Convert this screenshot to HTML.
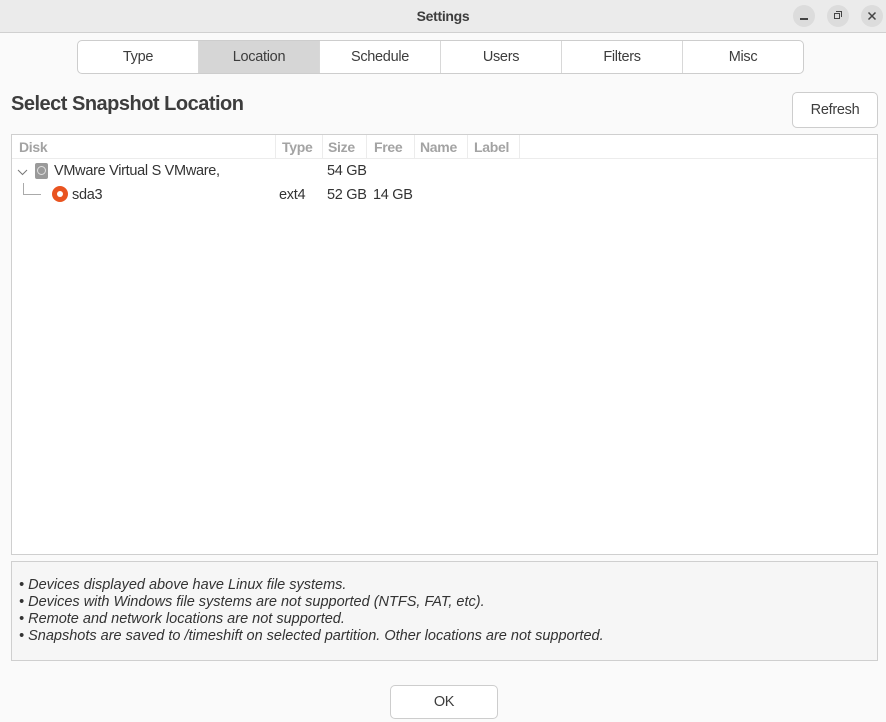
<!DOCTYPE html>
<html><head><meta charset="utf-8"><style>
*{box-sizing:border-box;margin:0;padding:0}
body{width:886px;height:722px;background:#fafafa;font-family:"Liberation Sans",sans-serif;color:#3d3d3d;position:relative;overflow:hidden;font-size:14px;letter-spacing:-0.3px}
.tb{position:absolute;left:0;top:0;width:886px;height:33px;background:#ebebeb;border-bottom:1px solid #d0d0d0}
.tb .t{position:absolute;top:8px;width:100%;text-align:center;font-weight:bold;font-size:14px;color:#3d3d3d}
.wb{position:absolute;top:5px;width:22px;height:22px;border-radius:50%;background:#dcdcdc}
.tabs{position:absolute;left:77px;top:40px;width:727px;height:34px;border:1px solid #cdcdcd;border-radius:5px;display:flex;overflow:hidden;background:#fff}
.tabs div{flex:1;text-align:center;line-height:32px;border-right:1px solid #d8d8d8;font-size:14.5px}
.tabs div:last-child{border-right:none}
.tabs .a{background:#d6d6d6}
h1{position:absolute;left:11px;top:93px;font-size:20px;font-weight:bold;color:#3d3d3d;letter-spacing:-0.5px}
.btn{position:absolute;border:1px solid #cdcdcd;border-radius:5px;background:#fff;text-align:center;font-size:14.5px}
.tree{position:absolute;left:11px;top:134px;width:867px;height:421px;border:1px solid #cfcfcf;background:#fff}
.hdr{position:absolute;left:0;top:0;width:100%;height:24px;border-bottom:1px solid #ececec;color:#a3a3a3;font-weight:bold;font-size:14px}
.hdr span{position:absolute;top:4px}
.sep{position:absolute;top:0;height:24px;border-left:1px solid #ececec}
.r{position:absolute;font-size:14.5px;color:#333}
.info{position:absolute;left:11px;top:561px;width:867px;height:100px;border:1px solid #cfcfcf;background:#f6f6f6;font-style:italic;font-size:14.5px;line-height:17px;padding:15px 0 0 7px;color:#333;letter-spacing:0}
</style></head><body>
<div class="tb"><div class="t">Settings</div>
<div class="wb" style="left:793px"><div style="position:absolute;left:7px;top:13px;width:8px;height:1.5px;background:#444"></div></div>
<div class="wb" style="left:827px"><div style="position:absolute;left:7px;top:8px;width:6px;height:6px;border:1px solid #444"></div><div style="position:absolute;left:9px;top:6px;width:6px;height:6px;border-top:1px solid #444;border-right:1px solid #444"></div></div>
<div class="wb" style="left:861px"><svg width="22" height="22" style="position:absolute;left:0;top:0"><path d="M7.5 7.5L14.5 14.5M14.5 7.5L7.5 14.5" stroke="#444" stroke-width="1.5"/></svg></div>
</div>
<div class="tabs"><div>Type</div><div class="a">Location</div><div>Schedule</div><div>Users</div><div>Filters</div><div>Misc</div></div>
<h1>Select Snapshot Location</h1>
<div class="btn" style="left:792px;top:92px;width:86px;height:36px;line-height:34px">Refresh</div>
<div class="tree">
<div class="hdr"><span style="left:7px">Disk</span><div class="sep" style="left:263px"></div><span style="left:270px">Type</span><div class="sep" style="left:310px"></div><span style="left:316px">Size</span><div class="sep" style="left:354px"></div><span style="left:362px">Free</span><div class="sep" style="left:402px"></div><span style="left:408px">Name</span><div class="sep" style="left:455px"></div><span style="left:462px">Label</span><div class="sep" style="left:507px"></div></div>
<svg width="12" height="10" style="position:absolute;left:5px;top:33px"><path d="M1 2L5.5 6.5L10 2" fill="none" stroke="#777" stroke-width="1"/></svg>
<div style="position:absolute;left:23px;top:28px;width:13px;height:16px;border-radius:2px;background:#9a9a9a"><div style="position:absolute;left:2px;top:3px;width:9px;height:9px;border-radius:50%;border:1px solid #e0e0e0"></div></div>
<div class="r" style="left:42px;top:28px">VMware Virtual S VMware,</div>
<div class="r" style="left:315px;top:28px">54 GB</div>
<div style="position:absolute;left:11px;top:48px;width:18px;height:12px;border-left:1px solid #aaa;border-bottom:1px solid #aaa"></div>
<div style="position:absolute;left:40px;top:51px;width:16px;height:16px;border-radius:50%;background:#e95420"><div style="position:absolute;left:5px;top:5px;width:6px;height:6px;border-radius:50%;background:#fff"></div></div>
<div class="r" style="left:60px;top:52px">sda3</div>
<div class="r" style="left:267px;top:52px">ext4</div>
<div class="r" style="left:315px;top:52px">52 GB</div>
<div class="r" style="left:361px;top:52px">14 GB</div>
</div>
<div class="info">• Devices displayed above have Linux file systems.<br>• Devices with Windows file systems are not supported (NTFS, FAT, etc).<br>• Remote and network locations are not supported.<br>• Snapshots are saved to /timeshift on selected partition. Other locations are not supported.</div>
<div class="btn" style="left:390px;top:685px;width:108px;height:34px;line-height:32px">OK</div>
</body></html>
